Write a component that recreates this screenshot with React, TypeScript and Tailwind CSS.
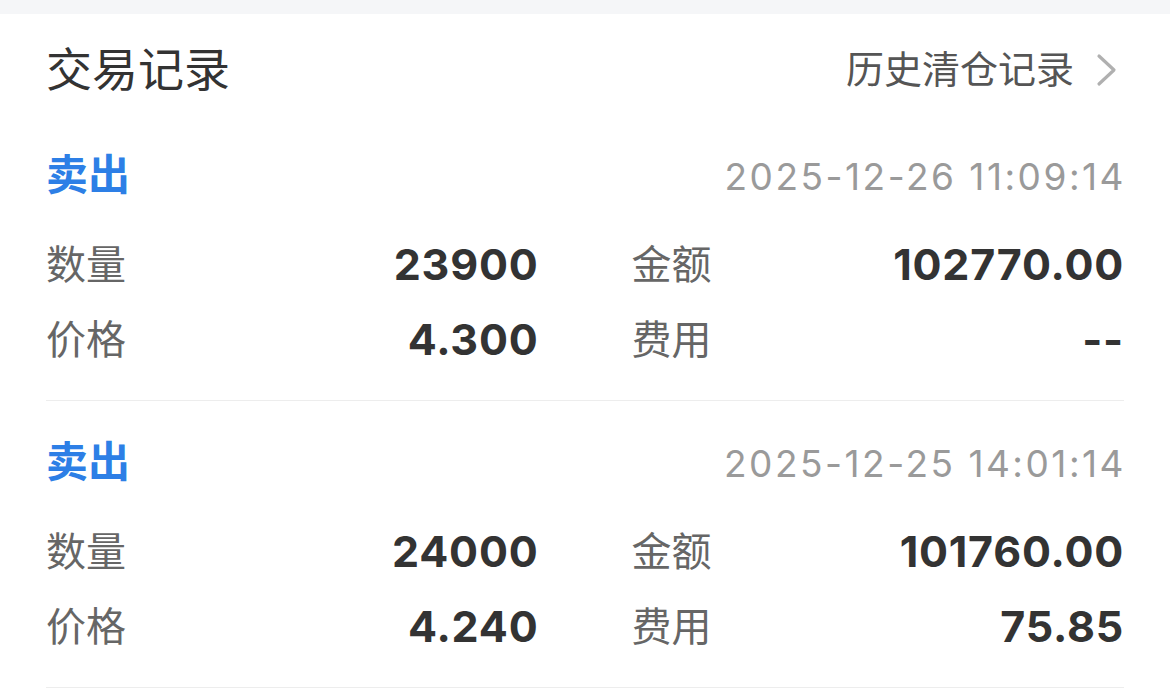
import React from 'react';

interface Trade {
  side: string;
  time: string;
  qty: string;
  amount: string;
  price: string;
  fee: string;
}

const trades: Trade[] = [
  { side: '卖出', time: '2025-12-26 11:09:14', qty: '23900', amount: '102770.00', price: '4.300', fee: '--' },
  { side: '卖出', time: '2025-12-25 14:01:14', qty: '24000', amount: '101760.00', price: '4.240', fee: '75.85' },
];

const cjk = "font-['Liberation_Sans','Noto_Sans_CJK_SC',sans-serif]";
const num = "font-['Inter','Noto_Sans_CJK_SC',sans-serif]";

const Cell: React.FC<{ label: string; value: string }> = ({ label, value }) => (
  <div className="flex items-center justify-between h-[75px]">
    <span className="text-[40px] text-[#666666] leading-none">{label}</span>
    <span className={`${num} text-[43px] font-bold text-[#333333] tracking-[0.8px] leading-none`}>{value}</span>
  </div>
);

const TradeItem: React.FC<{ trade: Trade }> = ({ trade }) => (
  <div className="pt-[34px] pb-[23px] border-b border-[#ededed]">
    <div className="flex items-center justify-between h-[56px]">
      <span className="text-[42px] font-bold text-[#2d7fe6] leading-none">{trade.side}</span>
      <span className={`${num} text-[37px] text-[#9a9a9a] tracking-[2.5px] -mr-[2px] leading-none`}>{trade.time}</span>
    </div>
    <div className="mt-[23px] grid grid-cols-2 gap-x-[93px]">
      <Cell label="数量" value={trade.qty} />
      <Cell label="金额" value={trade.amount} />
      <Cell label="价格" value={trade.price} />
      <Cell label="费用" value={trade.fee} />
    </div>
  </div>
);

export default function App() {
  return (
    <div className={`w-[1170px] h-[699px] overflow-hidden bg-[#f5f6f8] ${cjk}`}>
      <div className="mt-[14px] bg-white px-[46px] h-[685px]">
        <header className="h-[100px] pt-[12px] flex items-center justify-between">
          <h1 className="text-[46px] text-[#333333] leading-none">交易记录</h1>
          <button className="flex items-center gap-[22px] text-[38px] text-[#555555] leading-none">
            历史清仓记录
            <svg width="22" height="34" viewBox="0 0 22 34" fill="none" className="mr-[6px]">
              <path d="M3 3l15 14-15 14" stroke="#b0b0b0" strokeWidth="3.2" strokeLinecap="round" strokeLinejoin="round" />
            </svg>
          </button>
        </header>
        {trades.map((t, i) => (
          <TradeItem key={i} trade={t} />
        ))}
      </div>
    </div>
  );
}
